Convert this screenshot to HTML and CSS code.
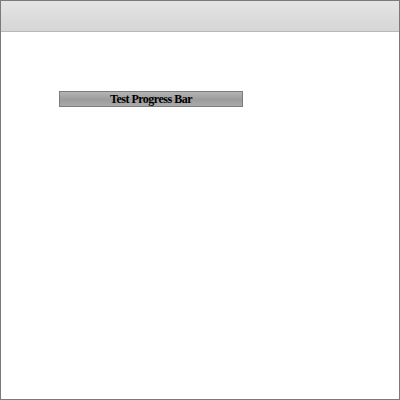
FILE: index.html
```html
<!DOCTYPE html>
<html>
<head>
<meta charset="utf-8">
<link rel="stylesheet" href="styles.css">
</head>
<body>
<div class="frame">
  <div class="titlebar"></div>
  <div class="content">
    <div class="progress">Test Progress Bar</div>
  </div>
</div>
</body>
</html>
```
FILE: styles.css
```css
html, body {
  margin: 0;
  padding: 0;
  background: #ffffff;
}
.frame {
  box-sizing: border-box;
  width: 400px;
  height: 400px;
  border: 1px solid #7a7a7a;
  background: #ffffff;
}
.titlebar {
  height: 30px;
  background: linear-gradient(to bottom, #e4e4e4, #d6d6d6);
  border-bottom: 1px solid #b9b9b9;
}
.content {
  padding: 59px 0 0 58px;
}
.progress {
  box-sizing: border-box;
  width: 184px;
  height: 16px;
  border: 1px solid #7c7c7c;
  background: linear-gradient(to bottom, #b4b4b4, #9c9c9c 55%, #aaaaaa);
  font-family: "Liberation Serif", "Times New Roman", serif;
  font-weight: bold;
  font-size: 12px;
  letter-spacing: -0.5px;
  line-height: 14px;
  text-align: center;
  color: #000;
}
```
